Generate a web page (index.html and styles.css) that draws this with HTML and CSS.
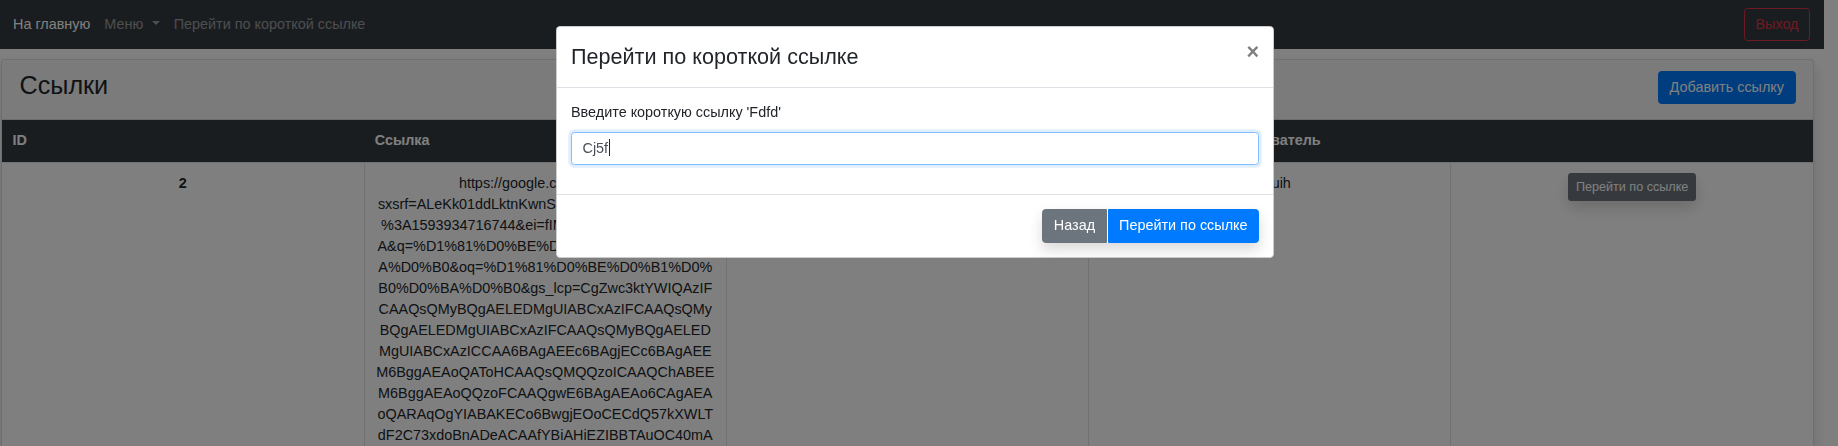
FILE: index.html
```html
<!DOCTYPE html>
<html lang="ru">
<head>
<meta charset="utf-8">
<title>Ссылки</title>
<link rel="stylesheet" href="styles.css">
</head>
<body>
<nav class="navbar">
  <ul class="nav">
    <li><a class="nav-link active" href="#">На главную</a></li>
    <li><a class="nav-link dropdown-toggle" href="#">Меню</a></li>
    <li><a class="nav-link" href="#">Перейти по короткой ссылке</a></li>
  </ul>
  <button class="btn btn-outline-danger" type="button">Выход</button>
</nav>

<main class="page">
  <section class="card">
    <header class="card-header">
      <h3 class="card-title">Ссылки</h3>
      <button class="btn btn-primary" type="button">Добавить ссылку</button>
    </header>
    <table class="links">
      <thead>
        <tr>
          <th>ID</th>
          <th>Ссылка</th>
          <th>Короткая ссылка</th>
          <th class="center">Пользователь</th>
          <th></th>
        </tr>
      </thead>
      <tbody>
        <tr>
          <th class="row-id">2</th>
          <td class="url">https://google.com/search?<br>sxsrf=ALeKk01ddLktnKwnShQ4dZmXfPjN9Yk2aTvx<br>%3A1593934716744&amp;ei=fIMBX9jxJcOUmwW6wq-I<br>A&amp;q=%D1%81%D0%BE%D0%B1%D0%B0%D0%B<br>A%D0%B0&amp;oq=%D1%81%D0%BE%D0%B1%D0%<br>B0%D0%BA%D0%B0&amp;gs_lcp=CgZwc3ktYWIQAzIF<br>CAAQsQMyBQgAELEDMgUIABCxAzIFCAAQsQMy<br>BQgAELEDMgUIABCxAzIFCAAQsQMyBQgAELED<br>MgUIABCxAzICCAA6BAgAEEc6BAgjECc6BAgAEE<br>M6BggAEAoQAToHCAAQsQMQQzoICAAQChABEE<br>M6BggAEAoQQzoFCAAQgwE6BAgAEAo6CAgAEA<br>oQARAqOgYIABAKECo6BwgjEOoCECdQ57kXWLT<br>dF2C73xdoBnADeACAAfYBiAHiEZIBBTAuOC40mA<br>BoAF4AKoBB2d3cy13aXqwAQrAAQE&amp;sclient=<br>psy-ab&amp;ved=0ahUKEwi8ksH5nsrqAhVJyKQ</td>
          <td>Fdfd</td>
          <td>asduih</td>
          <td><button class="btn btn-secondary btn-sm shadow" type="button">Перейти по ссылке</button></td>
        </tr>
      </tbody>
    </table>
  </section>
</main>

<div class="modal-backdrop"></div>

<div class="modal">
  <div class="modal-dialog">
    <div class="modal-header">
      <h4 class="modal-title">Перейти по короткой ссылке</h4>
      <button class="close" type="button" aria-label="Закрыть">×</button>
    </div>
    <div class="modal-body">
      <label class="form-label">Введите короткую ссылку 'Fdfd'</label>
      <div class="form-control">Cj5f<span class="caret"></span></div>
    </div>
    <div class="modal-footer">
      <div class="btn-group shadow">
        <button class="btn btn-secondary" type="button">Назад</button>
        <button class="btn btn-primary" type="button">Перейти по ссылке</button>
      </div>
    </div>
  </div>
</div>
</body>
</html>
```

FILE: styles.css
```css
* { box-sizing: border-box; }

html, body {
  margin: 0;
  height: 100%;
}

body {
  font-family: "Liberation Sans", Arial, sans-serif;
  font-size: 14.4px;
  line-height: 21px;
  color: #212529;
  background: #fff;
  overflow: hidden;
  padding-right: 14px;
}

/* ---------- buttons ---------- */
.btn {
  display: inline-block;
  font-family: inherit;
  font-size: 14.4px;
  line-height: 21px;
  padding: 5.25px 10.5px;
  border: 1px solid transparent;
  border-radius: 3.5px;
  background: transparent;
  cursor: pointer;
  white-space: nowrap;
}
.btn-primary { background: #007bff; border-color: #007bff; color: #fff; }
.btn-secondary { background: #6c757d; border-color: #6c757d; color: #fff; }
.btn-outline-danger { border-color: #dc3545; color: #dc3545; }
.btn-sm {
  font-size: 12.6px;
  line-height: 18.4px;
  padding: 3.5px 7px;
  border-radius: 2.8px;
}
.shadow { box-shadow: 0 7px 14px rgba(0, 0, 0, .15); }

/* ---------- navbar ---------- */
.navbar {
  display: flex;
  align-items: center;
  justify-content: space-between;
  background: #343a40;
  padding: 7px 14px;
}
.nav {
  display: flex;
  list-style: none;
  margin: 0 0 0 -8px;
  padding: 0;
}
.nav-link {
  display: block;
  padding: 7px;
  color: rgba(255, 255, 255, .5);
  text-decoration: none;
}
.nav-link.active { color: #fff; }
.dropdown-toggle::after {
  content: "";
  display: inline-block;
  margin-left: 8.5px;
  vertical-align: 3.7px;
  border-top: 4.3px solid;
  border-left: 4.3px solid transparent;
  border-right: 4.3px solid transparent;
}

/* ---------- page / card ---------- */
.page {
  padding: 10px 10px 0 1px;
}
.card {
  background: #fff;
  border: 1px solid rgba(0, 0, 0, .125);
  border-radius: 3.5px;
  box-shadow: 0 7px 14px rgba(0, 0, 0, .15);
  overflow: hidden;
}
.card-header {
  display: flex;
  justify-content: space-between;
  align-items: flex-start;
  padding: 10.5px 17.5px;
  background: rgba(0, 0, 0, .03);
  border-bottom: 1px solid rgba(0, 0, 0, .125);
}
.card-title {
  margin: 0 0 8.5px;
  font-size: 25.2px;
  font-weight: 500;
  line-height: 29.4px;
}

/* ---------- table ---------- */
.links {
  width: 100%;
  table-layout: fixed;
  border-collapse: collapse;
  border-style: hidden;
}
.links thead th {
  background: #343a40;
  color: #fff;
  text-align: left;
  font-weight: 700;
  padding: 10.5px;
  border: 0;
}
.links thead th.center { text-align: center; }
.links tbody td,
.links tbody th {
  padding: 10.5px;
  vertical-align: top;
  text-align: center;
  border: 1px solid #dee2e6;
}
.links .row-id { font-weight: 700; }
.links .url { word-break: break-all; }

/* ---------- modal ---------- */
.modal-backdrop {
  position: fixed;
  inset: 0;
  background: #000;
  opacity: .5;
}
.modal {
  position: fixed;
  top: 0;
  left: 0;
  right: 8px;
  bottom: 0;
}
.modal-dialog {
  width: 718px;
  margin: 26px auto 0;
  background: #fff;
  border: 1px solid rgba(0, 0, 0, .2);
  border-radius: 4.2px;
}
.modal-header {
  display: flex;
  align-items: flex-start;
  justify-content: space-between;
  padding: 14px;
  border-bottom: 1px solid #dee2e6;
}
.modal-title {
  margin: 0;
  font-size: 21.6px;
  font-weight: 500;
  line-height: 31.5px;
}
.close {
  padding: 14px;
  margin: -14px -14px -14px auto;
  background: transparent;
  border: 0;
  font-family: inherit;
  font-size: 21.6px;
  font-weight: 700;
  line-height: 1;
  color: #000;
  opacity: .5;
  text-shadow: 0 1px 0 #fff;
}
.modal-body {
  padding: 14px 14px 29.5px;
}
.form-label {
  display: block;
  margin-bottom: 9px;
}
.form-control {
  height: 33px;
  padding: 5px 10.5px;
  color: #495057;
  background: #fff;
  border: 1px solid #80bdff;
  border-radius: 3.5px;
  box-shadow: 0 0 0 2.8px rgba(0, 123, 255, .12);
}
.caret {
  display: inline-block;
  width: 1px;
  height: 17px;
  margin-left: 1px;
  vertical-align: -3px;
  background: #212529;
}
.modal-footer {
  display: flex;
  justify-content: flex-end;
  padding: 14px;
  border-top: 1px solid #dee2e6;
}
.btn-group {
  display: flex;
  gap: 1px;
  border-radius: 3.5px;
}
.btn-group .btn:first-child { border-top-right-radius: 0; border-bottom-right-radius: 0; }
.btn-group .btn:last-child { border-top-left-radius: 0; border-bottom-left-radius: 0; }
```
